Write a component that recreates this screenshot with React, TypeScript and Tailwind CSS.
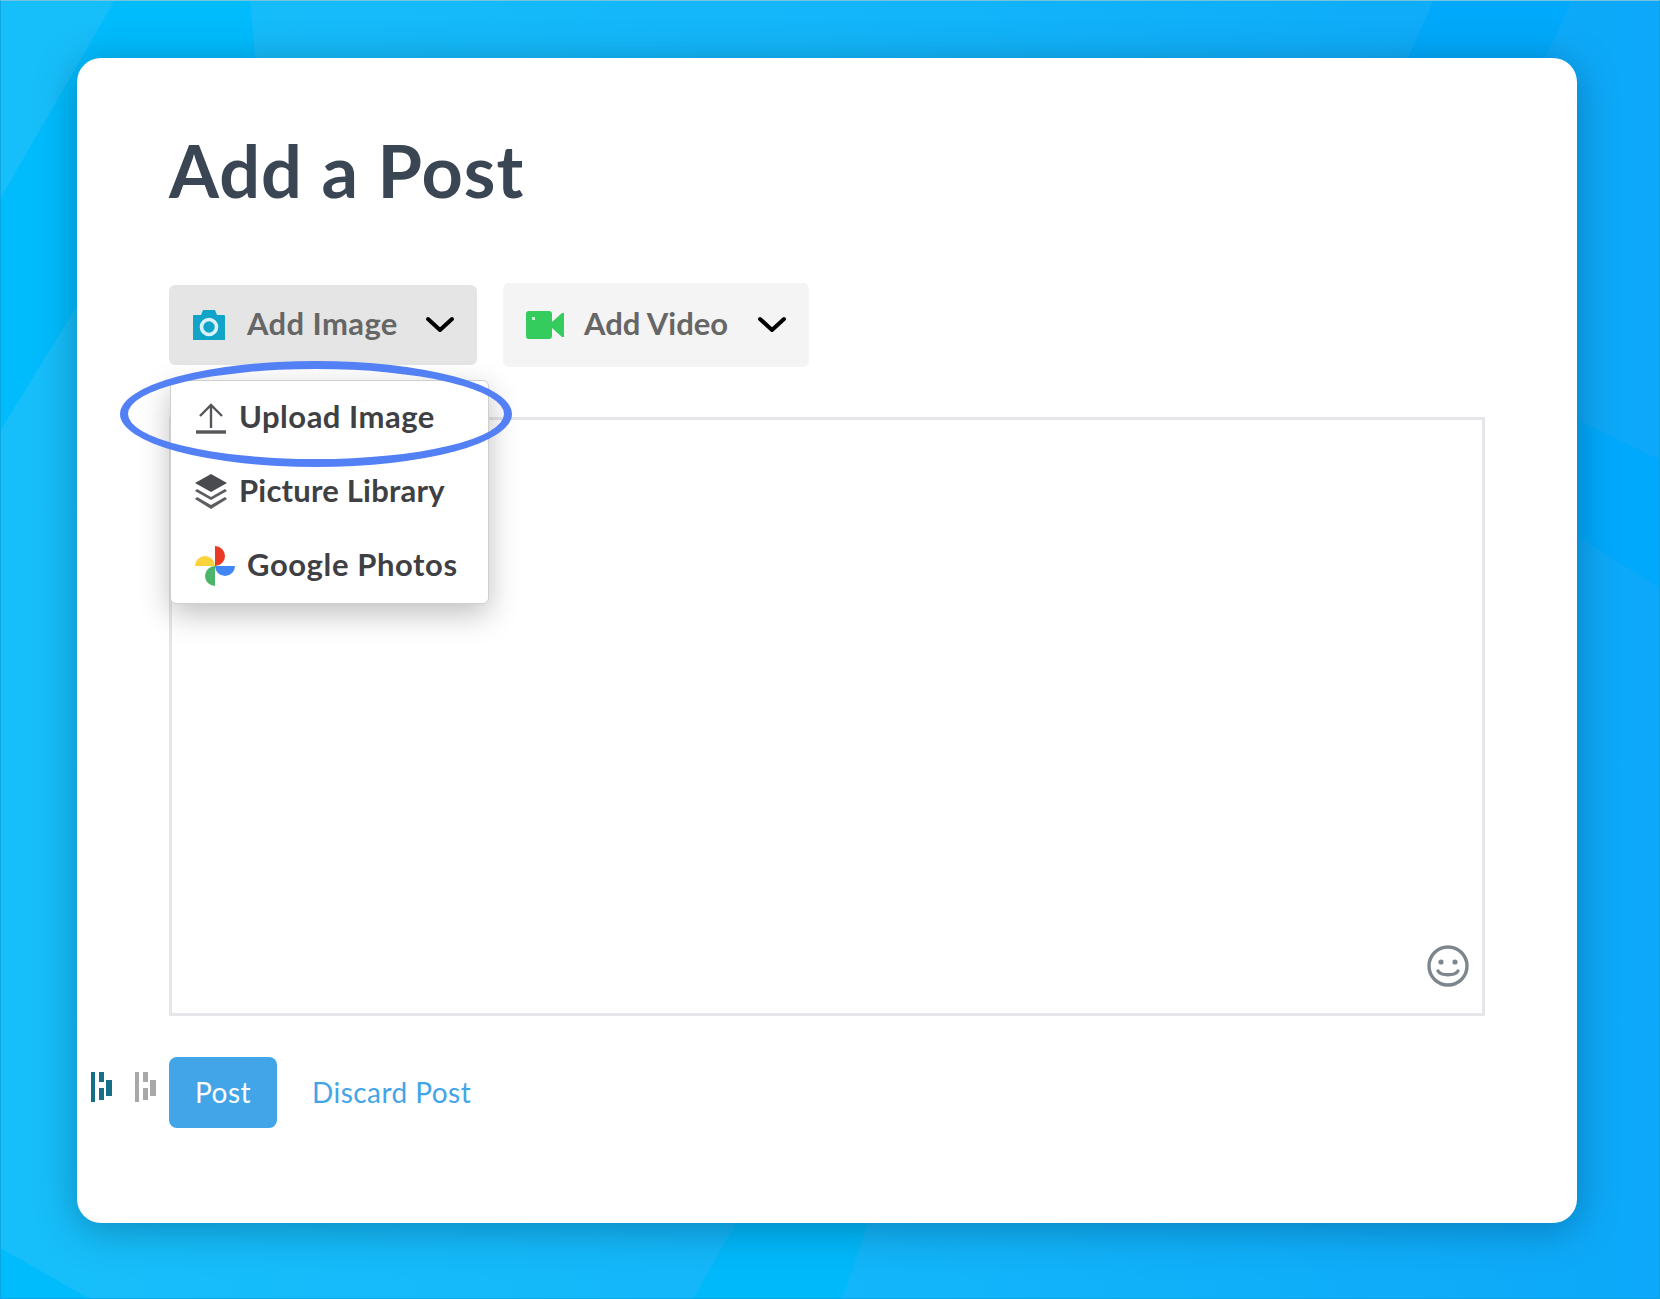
const font = "font-['Lato','Noto_Sans',sans-serif]";

function CameraIcon() {
  return (
    <svg width="34" height="32" viewBox="0 0 34 32" className="shrink-0">
      <path d="M1 7a1 1 0 0 1 1-1h7l2-5h12l2 5h7a1 1 0 0 1 1 1v24H1z" fill="#10a5c8" />
      <circle cx="17" cy="18" r="7.5" fill="none" stroke="#d9f1f7" strokeWidth="3.6" />
    </svg>
  );
}

function VideoIcon() {
  return (
    <svg width="38" height="28" viewBox="0 0 38 28" className="shrink-0">
      <rect x="0" y="0" width="26" height="28" rx="3" fill="#34cc5c" />
      <path d="M26 11 36 2h2v24h-2L26 17z" fill="#34cc5c" />
      <rect x="6" y="6" width="3" height="3" fill="#c8f2d4" />
    </svg>
  );
}

function Chevron() {
  return (
    <svg width="30" height="18" viewBox="0 0 30 18" fill="none" stroke="#000" strokeWidth="4" strokeLinecap="round" strokeLinejoin="round" className="ml-auto mr-[22px] shrink-0">
      <path d="M3 3l12 11L27 3" />
    </svg>
  );
}

function UploadIcon() {
  return (
    <svg width="32" height="32" viewBox="0 0 32 32" fill="none" stroke="#55565a" className="shrink-0">
      <path d="M16 26V3M5 14 16 3l11 11" strokeWidth="2.4" />
      <path d="M1 30h30" strokeWidth="3.4" />
    </svg>
  );
}

function LayersIcon() {
  return (
    <svg width="32" height="36" viewBox="0 0 32 36" className="shrink-0">
      <path d="M16 0 32 9 16 18 0 9z" fill="#4a4b4f" />
      <path d="M2 15l14 8 14-8 2 2-16 9L0 17zM2 23l14 8 14-8 2 2-16 10L0 25z" fill="#5c5d61" />
    </svg>
  );
}

function PhotosIcon() {
  return (
    <svg width="40" height="40" viewBox="0 0 40 40" className="shrink-0">
      <path d="M20 0A10 10 0 0 1 20 20Z" fill="#ea3a24" />
      <path d="M40 20A10 10 0 0 1 20 20Z" fill="#4285f4" />
      <path d="M20 40A10 10 0 0 1 20 20Z" fill="#4cb56a" />
      <path d="M0 20A10 10 0 0 1 20 20Z" fill="#fbd13c" />
    </svg>
  );
}

function SmileIcon() {
  return (
    <svg width="42" height="42" viewBox="0 0 42 42" fill="none" stroke="#7d868d" strokeWidth="3.4" className="absolute bottom-[26px] right-[13px]">
      <circle cx="21" cy="21" r="19" />
      <circle cx="14" cy="17" r="2.6" fill="#7d868d" stroke="none" />
      <circle cx="28" cy="17" r="2.6" fill="#7d868d" stroke="none" />
      <path d="M11 26c3 5 17 5 20 0" strokeLinecap="round" />
    </svg>
  );
}

function BarsMark({ color }: { color: string }) {
  return (
    <svg width="22" height="30" viewBox="0 0 22 30" fill={color}>
      <rect x="0" y="0" width="4" height="30" />
      <rect x="8" y="0" width="5" height="10" />
      <rect x="8" y="16" width="5" height="12" />
      <rect x="15" y="8" width="6" height="16" />
    </svg>
  );
}

export default function App() {
  return (
    <div className={`relative h-[1299px] w-full overflow-hidden bg-gradient-to-r from-[#17bffa] via-[#13b6fa] to-[#0da8f9] pl-[77px] pt-[58px] ${font}`}>
      {/* saturated bands in the background */}
      <div className="absolute inset-0 bg-[#00bcfd] [clip-path:polygon(115px_0,250px_0,255px_58px,77px_306px,0_431px,0_199px)]" />
      <div className="absolute inset-0 bg-[#00bcfd] [clip-path:polygon(0_1248px,90px_1299px,0_1299px)]" />
      <div className="absolute inset-0 bg-[#00b9fb] [clip-path:polygon(736px_1223px,868px_1223px,842px_1299px,693px_1299px)]" />
      <div className="absolute inset-0 bg-[#00a9fb] [clip-path:polygon(1434px_0,1572px_0,1545px_58px,1408px_58px)]" />
      <div className="absolute inset-0 bg-[#00a9fc] [clip-path:polygon(1577px_420px,1660px_460px,1660px_588px,1577px_536px)]" />
      <div className="pointer-events-none absolute inset-0 z-30 border border-[#0c9fd6]/70 border-t-[#74c3df]" />

      <div className="relative h-[1165px] w-[1500px] rounded-[24px] bg-white pl-[92px] pr-[92px] pt-[72px] shadow-[0_6px_40px_rgba(0,50,80,0.38)]">
        <h1 className="text-[72px] font-bold leading-[80px] tracking-[1px] text-[#3a4653]">Add a Post</h1>

        <div className="mt-[73px] flex h-[84px] items-center gap-[26px]">
          <button className="flex h-[80px] w-[308px] items-center rounded-md bg-[#e5e5e5] pl-[23px] text-[31px] font-bold text-[#666666]">
            <CameraIcon />
            <span className="ml-[21px] pb-[4px] tracking-[0.4px]">Add Image</span>
            <Chevron />
          </button>
          <button className="flex h-[84px] w-[306px] items-center rounded-md bg-[#f4f4f4] pl-[23px] text-[31px] font-bold text-[#666666]">
            <VideoIcon />
            <span className="ml-[20px] pb-[4px]">Add Video</span>
            <Chevron />
          </button>
        </div>

        <div className="relative mt-[50px] h-[599px] border-[3px] border-[#e6e6ea] bg-white">
          <SmileIcon />
        </div>

        <div className="mt-[41px] flex items-center">
          <button className="h-[71px] w-[108px] rounded-lg bg-[#42a5e8] pb-[2px] text-[28px] tracking-[0.5px] text-white">Post</button>
          <a className="ml-[35px] pb-[2px] text-[28px] tracking-[0.45px] text-[#42a5e8]">Discard Post</a>
        </div>

        {/* small marks left of the post button */}
        <div className="absolute left-[14px] top-[1014px] flex gap-[22px]">
          <BarsMark color="#156f86" />
          <BarsMark color="#a8a8a8" />
        </div>

        {/* open menu */}
        <div className="absolute left-[93px] top-[322px] z-10 flex h-[224px] w-[319px] flex-col rounded-md border border-[#cfcfcf] bg-white pl-[24px] text-[31px] font-bold text-[#3f4044] shadow-[0_10px_30px_rgba(0,0,0,0.25)]">
          <div className="flex h-[74px] items-center gap-[12px]">
            <UploadIcon />
            <span className="pb-[4px] tracking-[0.5px]">Upload Image</span>
          </div>
          <div className="flex h-[74px] items-center gap-[12px]">
            <LayersIcon />
            <span className="pb-[4px] tracking-[0.2px]">Picture Library</span>
          </div>
          <div className="flex h-[74px] items-center gap-[12px]">
            <PhotosIcon />
            <span className="pb-[4px] tracking-[0.6px]">Google Photos</span>
          </div>
        </div>

        {/* highlight ring */}
        <div className="absolute left-[43px] top-[303px] z-20 h-[106px] w-[392px] rounded-[50%] border-[8px] border-[#5480f5]" />
      </div>
    </div>
  );
}
